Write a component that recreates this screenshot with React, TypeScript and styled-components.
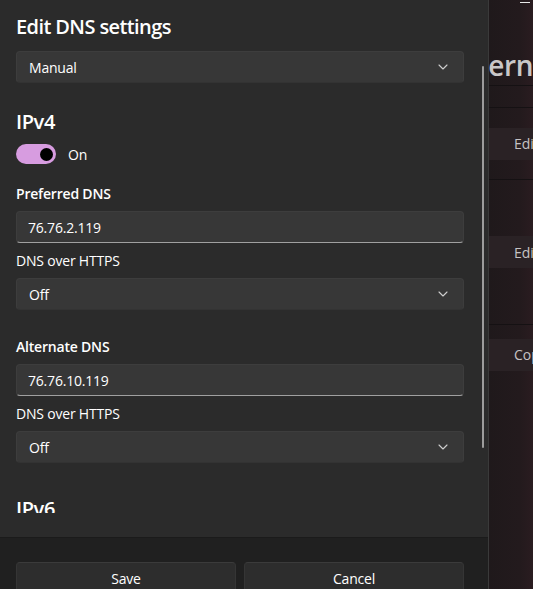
import React from 'react';
import styled, { createGlobalStyle } from 'styled-components';

const Global = createGlobalStyle`
  html, body {
    margin: 0;
    padding: 0;
    background: #1d1719;
  }
  body {
    font-family: "Open Sans", "Noto Sans", sans-serif;
    color: #ffffff;
  }
`;

const Screen = styled.div`
  width: 533px;
  height: 589px;
  display: flex;
  overflow: hidden;
`;

const Dialog = styled.div`
  width: 488px;
  flex-shrink: 0;
  display: flex;
  flex-direction: column;
  background: #2b2b2b;
  border-right: 1px solid #3a3a3a;
`;

const Body = styled.div`
  height: 537px;
  flex-shrink: 0;
  box-sizing: border-box;
  padding-bottom: 24px;
`;

const Scroller = styled.div`
  position: relative;
  height: 513px;
  overflow: hidden;
  padding: 13px 24px 0 16px;
  box-sizing: border-box;
`;

const ScrollThumb = styled.div`
  position: absolute;
  right: 4px;
  top: 66px;
  width: 2px;
  height: 382px;
  border-radius: 1px;
  background: #9c9c9c;
`;

const Title = styled.h1`
  margin: 0;
  font-size: 20px;
  line-height: 28px;
  font-weight: 600;
  letter-spacing: -0.6px;
`;

const Heading = styled.h2<{ $top: number }>`
  margin: ${(p) => p.$top}px 0 0;
  font-size: 20px;
  line-height: 28px;
  font-weight: 600;
  letter-spacing: -0.4px;
`;

const Label = styled.div<{ $top: number; $bold?: boolean }>`
  margin-top: ${(p) => p.$top}px;
  font-size: 14px;
  line-height: 20px;
  font-weight: ${(p) => (p.$bold ? 600 : 400)};
  letter-spacing: -0.2px;
`;

const Field = styled.div<{ $top: number; $input?: boolean }>`
  margin-top: ${(p) => p.$top}px;
  height: 32px;
  box-sizing: border-box;
  display: flex;
  align-items: center;
  justify-content: space-between;
  padding: 0 15px 0 ${(p) => (p.$input ? 11 : 12)}px;
  background: #373737;
  border: 1px solid #3d3d3d;
  border-bottom: 1px solid ${(p) => (p.$input ? '#a0a0a0' : '#333333')};
  border-radius: 4px;
  font-size: 14px;
  letter-spacing: -0.2px;
  color: #ffffff;
`;

const Chevron = () => (
  <svg width="10" height="6" viewBox="0 0 10 6" fill="none">
    <path d="M1 1l4 4 4-4" stroke="#cfcfcf" strokeWidth="1.1" strokeLinecap="round" strokeLinejoin="round" />
  </svg>
);

const ToggleRow = styled.div`
  margin-top: 8px;
  display: flex;
  align-items: center;
  gap: 12px;
  font-size: 14px;
  letter-spacing: -0.2px;
`;

const Toggle = styled.div`
  width: 40px;
  height: 20px;
  border-radius: 10px;
  background: #d79ce0;
  display: flex;
  align-items: center;
  justify-content: flex-end;
  padding-right: 3px;
  box-sizing: border-box;
`;

const Knob = styled.div`
  width: 13px;
  height: 13px;
  border-radius: 50%;
  background: #000000;
`;

const Footer = styled.div`
  flex: 1;
  background: #202020;
  border-top: 1px solid #1b1b1b;
  padding: 24px 24px 0 16px;
  display: grid;
  grid-template-columns: 220px 220px;
  column-gap: 8px;
  align-items: start;
`;

const Button = styled.button`
  height: 32px;
  border-radius: 4px;
  border: 1px solid #353535;
  border-top-color: #3b3b3b;
  background: #2d2d2d;
  color: #ffffff;
  font-family: inherit;
  font-size: 14px;
  letter-spacing: -0.2px;
`;

/* settings page behind the dialog */
const Backdrop = styled.div`
  flex: 1;
  min-width: 0;
  overflow: hidden;
  background: linear-gradient(90deg, #1f191b 0%, #231a1d 70%, #2a1c20 100%);
  display: flex;
  flex-direction: column;
`;

const TitleBar = styled.div`
  height: 30px;
  display: flex;
  justify-content: flex-end;
  padding: 2px 3px 0 0;
  box-sizing: border-box;
`;

const Minimize = styled.div`
  width: 10px;
  height: 1px;
  background: #e8e8e8;
`;

const PageTitle = styled.div`
  margin-left: -44px;
  margin-top: 16px;
  height: 39px;
  font-size: 28px;
  font-weight: 600;
  color: #c9c7c8;
  white-space: nowrap;
  letter-spacing: -0.4px;
`;

const Row = styled.div<{ $h: number }>`
  height: ${(p) => p.$h}px;
  flex-shrink: 0;
  border-top: 1px solid #151113;
  display: flex;
  align-items: center;
  box-sizing: border-box;
`;

const GhostButton = styled.div`
  width: 100%;
  height: 32px;
  display: flex;
  align-items: center;
  padding-left: 25px;
  box-sizing: border-box;
  background: #2a2225;
  color: #c6c3c4;
  font-size: 14px;
  white-space: nowrap;
`;

export default function App() {
  return (
    <>
      <Global />
      <Screen>
        <Dialog>
          <Body>
            <Scroller>
              <Title>Edit DNS settings</Title>
              <Field $top={10}>
                Manual
                <Chevron />
              </Field>

              <Heading $top={25}>IPv4</Heading>
              <ToggleRow>
                <Toggle>
                  <Knob />
                </Toggle>
                On
              </ToggleRow>

              <Label $top={20} $bold>Preferred DNS</Label>
              <Field $top={7} $input>76.76.2.119</Field>
              <Label $top={8}>DNS over HTTPS</Label>
              <Field $top={7}>
                Off
                <Chevron />
              </Field>

              <Label $top={27} $bold>Alternate DNS</Label>
              <Field $top={7} $input>76.76.10.119</Field>
              <Label $top={8}>DNS over HTTPS</Label>
              <Field $top={7}>
                Off
                <Chevron />
              </Field>

              <Heading $top={32}>IPv6</Heading>
              <ScrollThumb />
            </Scroller>
          </Body>
          <Footer>
            <Button>Save</Button>
            <Button>Cancel</Button>
          </Footer>
        </Dialog>

        <Backdrop>
          <TitleBar>
            <Minimize />
          </TitleBar>
          <PageTitle>Ethernet</PageTitle>
          <Row $h={22} />
          <Row $h={72}>
            <GhostButton>Edit</GhostButton>
          </Row>
          <Row $h={145}>
            <GhostButton>Edit</GhostButton>
          </Row>
          <Row $h={60}>
            <GhostButton>Copy</GhostButton>
          </Row>
        </Backdrop>
      </Screen>
    </>
  );
}
